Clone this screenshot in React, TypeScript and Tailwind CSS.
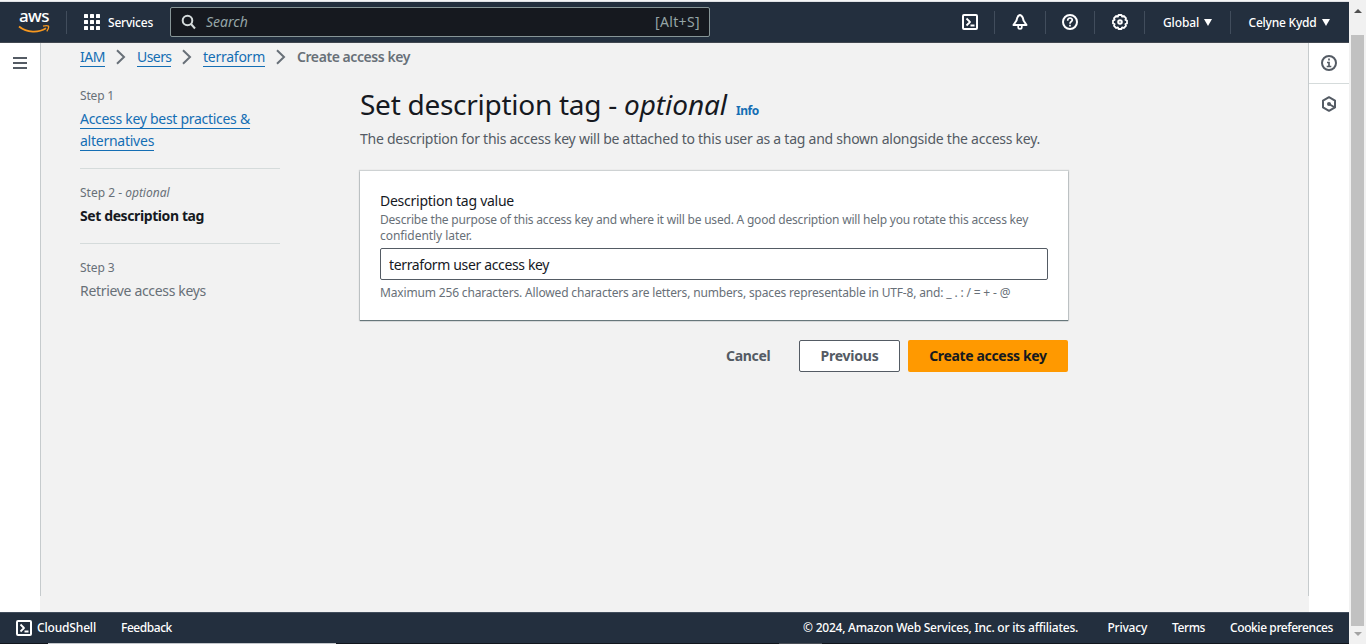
import type { ReactNode } from "react";

function Shell({ className }: { className?: string }) {
  return (
    <svg viewBox="0 0 16 16" className={className ?? "size-4"} fill="none" stroke="white" strokeWidth="2" strokeLinejoin="round">
      <rect x="1" y="1" width="14" height="14" rx="1" />
      <path d="M4.5 4.5 8 8l-3.5 3.5M8.500 11.500h4" strokeWidth="1.800" />
    </svg>
  );
}

function Chevron() {
  return (
    <svg viewBox="0 0 16 16" className="size-4 shrink-0" fill="none" stroke="#687078" strokeWidth="2">
      <path d="m4 1.200 7 6.800-7 6.800" />
    </svg>
  );
}

function Divider() {
  return <div className="h-[23px] w-px shrink-0 bg-[#414d5c]" />;
}

function Caret() {
  return (
    <svg viewBox="0 0 8 7" className="h-[7px] w-2 shrink-0" fill="white">
      <path d="M0 0h8L4 7z" />
    </svg>
  );
}

function Link({ children, className }: { children: ReactNode; className: string }) {
  return (
    <a href="#" className={`whitespace-nowrap border-b border-[#146eb4] text-[#146eb4] ${className}`}>
      {children}
    </a>
  );
}

function Header() {
  return (
    <header className="flex h-[41px] shrink-0 items-center border-b border-[#414750] bg-[#232f3e] text-xs font-medium text-white">
      <a href="#" aria-label="aws" className="ml-[17px] flex w-[34px] flex-col items-center">
        <span className="-mt-[4px] h-[17px] text-[17px] leading-[18px] tracking-[-0.5px]">aws</span>
        <svg viewBox="0 0 32 9" className="mt-px h-[9px] w-8" fill="none" stroke="#f7981f">
          <path d="M1 1.500c8 6.500 19.500 6.500 27 1.800" strokeWidth="1.800" />
          <path d="M25 1.200c2.300-.6 4.500-.6 5.500-.1 .4 1.200-.4 3.500-1.700 5.200" strokeWidth="1.300" />
        </svg>
      </a>
      <div className="ml-[15px] flex items-center">
        <Divider />
        <svg viewBox="0 0 16 16" className="ml-[17px] size-4" fill="white">
          {[0, 6, 12].map((y) => [0, 6, 12].map((x) => <rect key={`${x}-${y}`} x={x} y={y} width="4" height="4" rx="0.500" />))}
        </svg>
        <span className="ml-2 w-[45px] whitespace-nowrap pt-px tracking-[-0.218px]">Services</span>
      </div>
      <div className="ml-[17px] flex h-[30px] w-[540px] items-center rounded-[2px] border border-[#879596] bg-[#16191f] text-sm font-normal text-[#95a5a6]">
        <svg viewBox="0 0 16 16" className="ml-2.5 size-4 text-[#d5dbdb]" fill="none" stroke="currentColor" strokeWidth="2">
          <circle cx="6.500" cy="6.500" r="4.800" />
          <path d="m10 10 4 4.500" />
        </svg>
        <span className="ml-[9px] italic">Search</span>
        <span className="ml-auto mr-[9px] tracking-[0.355px]">[Alt+S]</span>
      </div>
      <div className="ml-auto flex items-center">
        <Shell />
        <div className="ml-4"><Divider /></div>
        <svg viewBox="0 0 16 16" className="ml-[17px] size-4" fill="none" stroke="white" strokeWidth="2" strokeLinejoin="round">
          <path d="M8 1C5.800 1.500 4.900 4 4.500 6.500L1.500 11h13l-3-4.500C11.100 4 10.200 1.500 8 1z" />
          <path d="M6.200 12v1.300c0 2.200 3.600 2.200 3.600 0V12" strokeWidth="1.700" />
        </svg>
        <div className="ml-[17px]"><Divider /></div>
        <svg viewBox="0 0 16 16" className="ml-4 size-4" fill="none" stroke="white" strokeWidth="2">
          <circle cx="8" cy="8" r="7" />
          <path d="M5.700 6.800C5.600 3 10.500 3.400 10.300 6.200 10.100 7.700 8 7.500 8 9.800M8 10.800v1.800" strokeWidth="1.700" />
        </svg>
        <div className="ml-4"><Divider /></div>
        <svg viewBox="0 0 16 16" className="ml-[17px] size-4" fill="none" stroke="white" strokeWidth="2" strokeLinejoin="round">
          <path d="M6.500 1h3l.6 1.600 1.700-.6 2.200 2.200-.6 1.700 1.600.6v3l-1.600.6.6 1.700-2.200 2.200-1.700-.6L9.500 15h-3l-.6-1.600-1.700.6L2 11.800l.6-1.700L1 9.500v-3l1.600-.6L2 4.200 4.200 2l1.700.6z" strokeWidth="1.800" />
          <circle cx="8" cy="8" r="1.800" />
        </svg>
        <div className="ml-4"><Divider /></div>
        <span className="ml-[18px] w-[35px] whitespace-nowrap pt-px tracking-[-0.14px]">Global</span>
        <div className="ml-1.5"><Caret /></div>
        <div className="ml-[18px]"><Divider /></div>
        <span className="ml-[17.5px] w-[67.5px] whitespace-nowrap pt-px tracking-[-0.22px]">Celyne Kydd</span>
        <div className="ml-1.5 mr-[19px]"><Caret /></div>
      </div>
    </header>
  );
}

function Steps() {
  return (
    <ol className="w-[200px] shrink-0 text-sm leading-[22px] text-[#687078]">
      <li className="border-b border-[#d5dbdb] pb-4">
        <div className="text-xs leading-[22px] tracking-[-0.175px]">Step 1</div>
        <div className="mt-px">
          <Link className="tracking-[-0.290px]">Access key best practices &amp;</Link>
          <br />
          <Link className="tracking-[-0.250px]">alternatives</Link>
        </div>
      </li>
      <li className="border-b border-[#d5dbdb] pb-4 pt-[13px]">
        <div className="text-xs leading-[22px]">
          Step 2 - <i>optional</i>
        </div>
        <div className="mt-px whitespace-nowrap font-bold tracking-[-0.4px] text-[#16191f]">Set description tag</div>
      </li>
      <li className="pt-[13px]">
        <div className="text-xs leading-[22px] tracking-[-0.1px]">Step 3</div>
        <div className="mt-px tracking-[-0.325px]">Retrieve access keys</div>
      </li>
    </ol>
  );
}

function Content() {
  return (
    <div className="ml-20 w-[708px] shrink-0 pt-px">
      <h1 className="flex items-baseline whitespace-nowrap text-[28px] leading-9 text-[#16191f]">
        <span className="tracking-[-0.267px]">Set description tag -</span>
        <i className="ml-[7px] tracking-[-0.075px]">optional</i>
        <a href="#" className="ml-[9px] text-xs font-bold tracking-[-0.5px] text-[#146eb4]">Info</a>
      </h1>
      <p className="mt-1.5 whitespace-nowrap text-sm leading-[22px] tracking-[-0.248px] text-[#545b64]">
        The description for this access key will be attached to this user as a tag and shown alongside the access key.
      </p>
      <section className="mt-[21px] h-[149px] bg-white px-5 pt-[19px] shadow-[0_1px_1px_0_rgba(0,28,36,0.5),0_0_1px_1px_rgba(0,28,36,0.15)]">
        <label htmlFor="tag" className="block text-sm leading-[22px] tracking-[-0.25px] text-[#16191f]">Description tag value</label>
        <div className="whitespace-nowrap text-xs leading-4 text-[#687078]">
          <div className="tracking-[-0.204px]">Describe the purpose of this access key and where it will be used. A good description will help you rotate this access key</div>
          <div className="tracking-[-0.06px]">confidently later.</div>
        </div>
        <input
          id="tag"
          defaultValue="terraform user access key"
          className="mt-1 block h-8 w-[668px] rounded-[2px] border border-[#545b64] bg-white px-2 text-sm tracking-[-0.36px] text-[#16191f]"
        />
        <div className="mt-[5px] whitespace-nowrap text-xs leading-4 tracking-[-0.163px] text-[#687078]">
          Maximum 256 characters. Allowed characters are letters, numbers, spaces representable in UTF-8, and: _ . : / = + - @
        </div>
      </section>
      <div className="mt-5 flex h-8 items-stretch justify-end whitespace-nowrap text-sm font-bold text-[#545b64]">
        <button className="mr-[29px] w-[44px] tracking-[-0.288px]">Cancel</button>
        <button className="w-[101px] rounded-[2px] border border-[#545b64] bg-white tracking-[-0.226px]">Previous</button>
        <button className="ml-2 w-40 rounded-[2px] bg-[#ff9900] tracking-[-0.348px] text-[#16191f]">Create access key</button>
      </div>
    </div>
  );
}

function Footer() {
  return (
    <footer className="flex h-8 shrink-0 flex-col border-t border-[#414d5c] bg-[#232f3e] text-xs font-medium text-white">
      <div className="flex flex-1 items-center whitespace-nowrap">
        <Shell className="ml-4 size-4" />
        <span className="ml-[5px] w-[59px] tracking-[-0.165px]">CloudShell</span>
        <span className="ml-[25px] tracking-[-0.450px]">Feedback</span>
        <span className="ml-auto w-[275px] tracking-[-0.237px]">© 2024, Amazon Web Services, Inc. or its affiliates.</span>
        <span className="ml-[29.5px] w-[39.5px] tracking-[-0.222px]">Privacy</span>
        <span className="ml-[25px] w-[33px] tracking-[-0.413px]">Terms</span>
        <span className="ml-[25px] mr-4 w-[103px] tracking-[-0.413px]">Cookie preferences</span>
      </div>
      <div className="flex h-px bg-[#11161d]">
        <div className="ml-12 h-px w-72 bg-[#c3c6ca]" />
        <div className="ml-[443px] h-px w-[43px] bg-[#4a4f57]" />
      </div>
    </footer>
  );
}

export default function App() {
  return (
    <div className="flex h-[644px] w-[1366px] overflow-hidden bg-white font-['Noto_Sans',sans-serif]">
      <div className="flex w-[1349px] shrink-0 flex-col">
        <div className="h-0.5 shrink-0 border-b border-[#dfe1e5] bg-[#f5f6f7]" />
        <Header />
        <main className="flex flex-1">
          <nav className="w-10 shrink-0 pl-[13px] pt-[14px]">
            <svg viewBox="0 0 14 12" className="h-3 w-3.5" fill="none" stroke="#545b64" strokeWidth="2">
              <path d="M0 1h14M0 6h14M0 11h14" />
            </svg>
          </nav>
          <div className="flex flex-1 flex-col bg-[#f2f2f2]">
            <div className="flex h-[553px] flex-col border-x border-[#c6cbcd] pl-[39px]">
              <div className="mt-[3px] flex h-[22px] items-center text-sm leading-[18px]">
                <Link className="w-[25px] tracking-[-0.463px]">IAM</Link>
                <div className="mx-2"><Chevron /></div>
                <Link className="w-[34px] tracking-[-0.565px]">Users</Link>
                <div className="mx-2"><Chevron /></div>
                <Link className="w-[62px] tracking-[-0.25px]">terraform</Link>
                <div className="mx-2"><Chevron /></div>
                <span className="whitespace-nowrap font-semibold tracking-[-0.43px] text-[#687078]">Create access key</span>
              </div>
              <div className="mt-[17px] flex">
                <Steps />
                <Content />
              </div>
            </div>
          </div>
          <aside className="flex w-10 shrink-0 flex-col items-center">
            <div className="flex h-[41px] w-full items-center justify-center border-b border-[#d5dbdb]">
              <svg viewBox="0 0 16 16" className="size-4" fill="none" stroke="#545b64" strokeWidth="2">
                <circle cx="8" cy="8" r="7" />
                <path d="M8 3.500v2M6 7.500h2v4M5.700 11.500h4.600" strokeWidth="1.700" />
              </svg>
            </div>
            <svg viewBox="0 0 16 16" className="mt-3 size-4" fill="none" stroke="#545b64" strokeWidth="2" strokeLinejoin="round">
              <path d="M8 1.200 14 4.600v6.800L8 14.800 2 11.400V4.600z" />
              <circle cx="8" cy="8" r="2" fill="#545b64" stroke="none" />
              <path d="m8 8 5 3" />
            </svg>
          </aside>
        </main>
        <Footer />
      </div>
      <div className="flex flex-1 flex-col items-center bg-[#f1f1f1]">
        <svg viewBox="0 0 8 4" className="mt-[9px] h-1 w-2" fill="#505050"><path d="M0 4 4 0l4 4z" /></svg>
        <div className="mt-[22px] h-[591px] w-[13px] bg-[#c1c1c1]" />
        <svg viewBox="0 0 8 4" className="mt-1.5 h-1 w-2" fill="#a3a3a3"><path d="M0 0h8L4 4z" /></svg>
      </div>
    </div>
  );
}
